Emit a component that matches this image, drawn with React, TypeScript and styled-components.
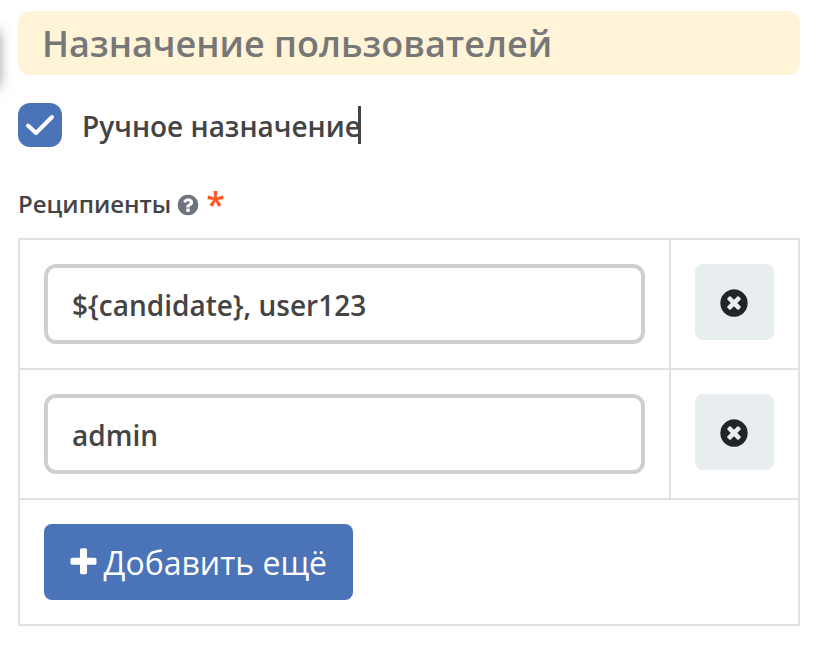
import React from "react";
import styled, { createGlobalStyle } from "styled-components";

const GlobalStyle = createGlobalStyle`
  *, *::before, *::after { box-sizing: border-box; }
  body {
    margin: 0;
    background: #fff;
    color: #444;
    font-family: "Open Sans", "Noto Sans", sans-serif;
    overflow: hidden;
  }
`;

const Page = styled.main`
  position: relative;
  height: 655px;
  padding: 11px 24px 0 18px;
`;

const NeighbourEdge = styled.div`
  position: absolute;
  left: -22px;
  top: 28px;
  width: 20px;
  height: 58px;
  border-radius: 6px;
  box-shadow: 0 2px 14px rgba(0, 0, 0, 0.5);
`;

const Title = styled.h1`
  margin: 0;
  height: 64px;
  padding: 1px 0 0 24px;
  border-radius: 12px;
  background: #fff4d8;
  color: #777;
  font-size: 36px;
  font-weight: 600;
  line-height: 64px;
  white-space: nowrap;
`;

const CheckRow = styled.label`
  display: flex;
  align-items: center;
  height: 44px;
  margin-top: 28px;
`;

const CheckBox = styled.span`
  display: flex;
  width: 44px;
  height: 44px;
  border-radius: 12px;
  background: #4b74b8;
`;

const CheckText = styled.span`
  margin-left: 20px;
  padding-top: 2px;
  font-size: 28px;
  font-weight: 600;
  line-height: 44px;
  white-space: nowrap;
`;

const Caret = styled.span`
  width: 3px;
  height: 38px;
  margin: 0 0 0 -3px;
  background: #444;
`;

const FieldLabel = styled.div`
  display: flex;
  align-items: center;
  height: 36px;
  margin-top: 39px;
  font-size: 24px;
  font-weight: 600;
  line-height: 36px;
`;

const HelpIcon = styled.svg`
  width: 24px;
  height: 24px;
  margin: 1px 0 0 5px;
  fill: #6c757d;
`;

const Required = styled.span`
  margin-left: 6px;
  color: #ff5722;
  font-size: 34px;
`;

const Table = styled.div`
  width: 782px;
  margin-top: 16px;
  border: 2px solid #dee2e6;
`;

const Row = styled.div`
  display: grid;
  grid-template-columns: 649px 1fr;
  height: 130px;
  border-bottom: 2px solid #dee2e6;
`;

const InputCell = styled.div`
  padding: 24px 24px 0;
`;

const ActionCell = styled.div`
  padding: 24px 24px 0;
  border-left: 2px solid #dee2e6;
`;

const Input = styled.input`
  display: block;
  width: 601px;
  height: 80px;
  padding: 2px 24px 0;
  border: 4px solid #cfcfcf;
  border-radius: 12px;
  outline: none;
  background: #fff;
  color: #444;
  font: 600 28px "Open Sans", "Noto Sans", sans-serif;
`;

const RemoveButton = styled.button`
  display: flex;
  align-items: center;
  justify-content: center;
  width: 79px;
  height: 76px;
  padding: 1px 1px 0 0;
  border: 0;
  border-radius: 8px;
  background: #e8edef;
  svg { width: 32px; height: 32px; fill: #212529; }
`;

const Footer = styled.div`
  height: 124px;
  padding: 24px;
`;

const AddButton = styled.button`
  display: flex;
  align-items: center;
  width: 309px;
  height: 76px;
  padding: 0 0 0 22.5px;
  border: 0;
  border-radius: 8px;
  background: #4b74b8;
  color: #fff;
  font: 400 32px "Open Sans", "Noto Sans", sans-serif;
  white-space: nowrap;
  svg { width: 33px; height: 33px; margin-right: 4px; fill: #fff; flex: none; }
`;

const CIRCLE =
  "M1664 896q0 209-103 385.5t-279.5 279.5-385.5 103-385.5-103-279.5-279.5-103-385.5 103-385.5 279.5-279.5 385.5-103 385.5 103 279.5 279.5 103 385.5z";

const RemoveIcon = () => (
  <svg viewBox="0 0 1792 1792">
    <path fillRule="evenodd" d={`M1277 1122q0-26-19-45l-181-181 181-181q19-19 19-45 0-27-19-46l-90-90q-19-19-46-19-26 0-45 19l-181 181-181-181q-19-19-45-19-27 0-46 19l-90 90q-19 19-19 46 0 26 19 45l181 181-181 181q-19 19-19 45 0 27 19 46l90 90q19 19 46 19 26 0 45-19l181-181 181 181q19 19 45 19 27 0 46-19l90-90q19-19 19-46z${CIRCLE}`} />
  </svg>
);

const recipients = ["${candidate}, user123", "admin"];

export default function App() {
  return (
    <>
      <GlobalStyle />
      <Page>
        <NeighbourEdge />
        <Title>Назначение пользователей</Title>
        <CheckRow>
          <CheckBox>
            <svg width="44" height="44" viewBox="0 0 44 44" fill="none" stroke="#fff" strokeWidth="4" strokeLinecap="round" strokeLinejoin="round">
              <path d="M10 22.5 18 30 34 14" />
            </svg>
          </CheckBox>
          <CheckText>Ручное назначение</CheckText>
          <Caret />
        </CheckRow>
        <FieldLabel>
          <span>Реципиенты</span>
          <HelpIcon viewBox="0 0 1792 1792">
            <path fillRule="evenodd" d={`M1024 1376v-192q0-14-9-23t-23-9h-192q-14 0-23 9t-9 23v192q0 14 9 23t23 9h192q14 0 23-9t9-23zm256-672q0-88-55.5-163t-138.5-116-170-41q-243 0-371 213-15 24 8 42l132 100q7 6 19 6 16 0 25-12 53-68 86-92 34-24 86-24 48 0 85.5 26t37.5 59q0 38-20 61t-68 45q-63 28-115.5 86.5t-52.5 125.5v36q0 14 9 23t23 9h192q14 0 23-9t9-23q0-19 21.5-49.5t54.5-49.5q32-18 49-28.5t46-35 44.5-48 28-60.5 12.5-81z${CIRCLE}`} />
          </HelpIcon>
          <Required>*</Required>
        </FieldLabel>
        <Table>
          {recipients.map((value) => (
            <Row key={value}>
              <InputCell>
                <Input defaultValue={value} />
              </InputCell>
              <ActionCell>
                <RemoveButton>
                  <RemoveIcon />
                </RemoveButton>
              </ActionCell>
            </Row>
          ))}
          <Footer>
            <AddButton>
              <svg viewBox="0 0 1792 1792">
                <path d="M1600 736v192q0 40-28 68t-68 28h-416v416q0 40-28 68t-68 28h-192q-40 0-68-28t-28-68v-416h-416q-40 0-68-28t-28-68v-192q0-40 28-68t68-28h416v-416q0-40 28-68t68-28h192q40 0 68 28t28 68v416h416q40 0 68 28t28 68z" />
              </svg>
              <span>Добавить ещё</span>
            </AddButton>
          </Footer>
        </Table>
      </Page>
    </>
  );
}
